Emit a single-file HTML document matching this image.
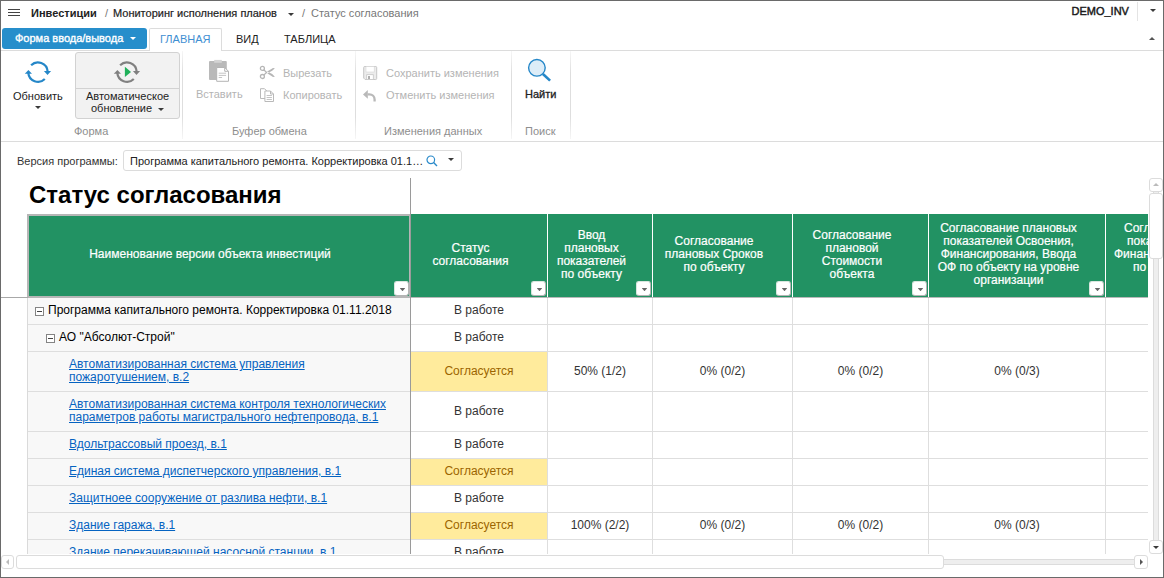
<!DOCTYPE html>
<html lang="ru">
<head>
<meta charset="utf-8">
<title>Статус согласования</title>
<style>
*{box-sizing:border-box;margin:0;padding:0}
html,body{width:1164px;height:578px;overflow:hidden;background:#fff}
body{font-family:"Liberation Sans",Arial,sans-serif;font-size:11px;color:#333;position:relative}
.abs{position:absolute}
.t{position:absolute;white-space:nowrap;line-height:14px;height:14px}
.frame{position:absolute;left:0;top:0;width:1164px;height:578px;border:1px solid #6a6a6a;z-index:50;pointer-events:none}
.dis{color:#b4b4b4}
.grp{color:#8e8e8e}
.sep{position:absolute;top:51px;height:88px;width:1px;background:linear-gradient(#f6f6f6,#dedede 25%,#dedede 75%,#f6f6f6)}
.caret{position:absolute;width:0;height:0;border-left:3px solid transparent;border-right:3px solid transparent;border-top:3px solid #3a3a3a}
/* table */
.hd{-webkit-text-stroke:0.2px #fff;position:absolute;top:214px;height:83px;background:#229263;color:#fff;font-size:12px;line-height:13px;text-align:center;display:flex;align-items:center;justify-content:center;padding-right:17px;padding-bottom:2px}
.fb{position:absolute;width:15px;height:15px;top:281px;background:#fff;border-radius:3px;border:1px solid #d9e6df;border-right-color:#b4b4b4;border-bottom-color:#b4b4b4}
.fb:after{content:"";position:absolute;left:4.7px;top:6px;width:5.6px;height:3.2px;background:#666;clip-path:polygon(0 0,100% 0,50% 100%)}
.hl{position:absolute;height:1px;background:#dedede;left:28px;width:1120px}
.vl{position:absolute;width:1px;background:#dedede;top:298px;height:256px}
.c{position:absolute;font-size:12px;line-height:13px;text-align:center;color:#333;padding-top:6px;white-space:nowrap}
.c.h39{padding-top:13px}
.y{background:#ffeb9c;color:#9c6500}
.lk{position:absolute;left:69px;font-size:12px;line-height:13px;color:#0563c1;text-decoration:underline;white-space:nowrap}
.tx{position:absolute;font-size:12px;line-height:13px;color:#000;white-space:nowrap}
.ex{position:absolute;width:9px;height:9px;border:1px solid #848484;background:#fff}
.ex:after{content:"";position:absolute;left:1px;top:3px;width:5px;height:1px;background:#444}
.sb{position:absolute;background:#fff;border:1px solid #dcdcdc;border-radius:3px}
</style>
</head>
<body>
<!-- top bar -->
<div class="abs" style="left:8px;top:9px;width:12px;height:1px;background:#444"></div>
<div class="abs" style="left:8px;top:12px;width:12px;height:1px;background:#444"></div>
<div class="abs" style="left:8px;top:15px;width:12px;height:1px;background:#444"></div>
<div class="t" style="left:31px;top:6px;font-weight:bold;color:#222">Инвестиции</div>
<div class="t" style="left:105px;top:6px;color:#777">/</div>
<div class="t" style="left:113px;top:6px;color:#222;-webkit-text-stroke:0.2px #222">Мониторинг исполнения планов</div>
<div class="caret" style="left:288px;top:13px"></div>
<div class="t" style="left:302px;top:6px;color:#777">/</div>
<div class="t" style="left:311px;top:6px;color:#777">Статус согласования</div>
<div class="t" style="left:1071.5px;top:4px;color:#1a1a1a;-webkit-text-stroke:0.45px #1a1a1a">DEMO_INV</div>
<div class="abs" style="left:1137px;top:2px;width:1px;height:19px;background:#e4e4e4"></div>
<div class="caret" style="left:1150px;top:9px"></div>

<!-- tab row -->
<div class="abs" style="left:1px;top:50px;width:1162px;height:1px;background:#dcdcdc"></div>
<div class="abs" style="left:2px;top:28px;width:145px;height:21px;background:#268ecb;border-radius:3px"></div>
<div class="t" style="left:15px;top:31px;color:#fff;-webkit-text-stroke:0.35px #fff">Форма ввода/вывода</div>
<div class="caret" style="left:130px;top:37px;border-top-color:#fff"></div>
<div class="abs" style="left:149px;top:28px;width:73px;height:23px;background:#fff;border:1px solid #dcdcdc;border-bottom:none;border-radius:2px 2px 0 0"></div>
<div class="t" style="left:160px;top:32px;color:#3f8fd2;font-size:11px">ГЛАВНАЯ</div>
<div class="t" style="left:236px;top:32px;color:#222">ВИД</div>
<div class="t" style="left:284px;top:32px;color:#222">ТАБЛИЦА</div>
<div class="abs" style="left:1149px;top:37px;width:0;height:0;border-left:3px solid transparent;border-right:3px solid transparent;border-bottom:3px solid #555"></div>

<!-- ribbon -->
<div class="abs" style="left:1px;top:141px;width:1162px;height:1px;background:#dcdcdc"></div>
<div class="sep" style="left:182px"></div>
<div class="sep" style="left:355px"></div>
<div class="sep" style="left:511px"></div>
<div class="sep" style="left:570px"></div>

<!-- refresh -->
<svg class="abs" style="left:18px;top:54px" width="40" height="36" viewBox="0 0 40 36">
 <g fill="none" stroke="#2587c8" stroke-width="2.2">
  <path d="M13.1 11.2 A9.7 9.7 0 0 1 29.6 17.3"/>
  <path d="M26.8 25 A9.7 9.7 0 0 1 10.3 18.9"/>
 </g>
 <path d="M25.9 17.1 L33.1 17.1 L29.5 21 Z" fill="#2587c8"/>
 <path d="M6.8 19.8 L14 19.8 L10.4 15.9 Z" fill="#2587c8"/>
</svg>
<div class="t" style="left:13px;top:89px;color:#222">Обновить</div>
<div class="caret" style="left:35px;top:106px"></div>

<!-- auto update -->
<div class="abs" style="left:75px;top:52px;width:105px;height:67px;background:#f2f2f2;border:1px solid #d2d2d2;border-radius:3px"></div>
<div class="abs" style="left:76px;top:88px;width:103px;height:1px;background:#d2d2d2"></div>
<svg class="abs" style="left:107px;top:54px" width="40" height="36" viewBox="0 0 40 36">
 <g fill="none" stroke="#808080" stroke-width="2.2">
  <path d="M13.1 11.2 A9.7 9.7 0 0 1 29.6 17.3"/>
  <path d="M26.8 25 A9.7 9.7 0 0 1 10.3 18.9"/>
 </g>
 <path d="M25.9 17.1 L33.1 17.1 L29.5 21 Z" fill="#808080"/>
 <path d="M6.8 19.8 L14 19.8 L10.4 15.9 Z" fill="#808080"/>
 <path d="M17.9 12.8 L24 17.9 L17.9 23.1 Z" fill="#20b15a"/>
</svg>
<div class="t" style="left:86px;top:89px;color:#222">Автоматическое</div>
<div class="t" style="left:91px;top:101px;color:#222">обновление</div>
<div class="caret" style="left:158px;top:108px"></div>
<div class="t grp" style="left:74px;top:124px">Форма</div>

<!-- clipboard -->
<svg class="abs" style="left:208px;top:59px" width="22" height="24" viewBox="0 0 22 24">
 <rect x="1" y="2" width="17.8" height="19" rx="1" fill="#b9b9b9"/>
 <rect x="6.2" y="0.9" width="7.6" height="2.9" fill="#d4d4d4"/>
 <path d="M8.7 8.5 h8 l3.8 3.8 v10 h-11.8z" fill="#fff" stroke="#b4b4b4" stroke-width="1"/>
 <path d="M16.7 8.5 v3.8 h3.8" fill="none" stroke="#b4b4b4" stroke-width="1"/>
 <path d="M10.7 14.2h7.4M10.7 16.4h7.4M10.7 18.5h3.4" stroke="#c4c4c4" stroke-width="1"/>
</svg>
<div class="t dis" style="left:196px;top:87px">Вставить</div>
<svg class="abs" style="left:259px;top:65px" width="17" height="15" viewBox="0 0 17 15">
 <g fill="none" stroke="#b6b6b6" stroke-width="1.3">
  <circle cx="3.4" cy="3.4" r="2"/><circle cx="3.4" cy="11.5" r="2"/>
  <path d="M4.8 4.8 L8 7.9M4.8 10.1 L8 7"/>
 </g>
 <path d="M7 7.3 L14 3 L15.9 3.2 L13.2 5.8 L8.2 8.5Z M7 7.6 L14 11.9 L15.9 11.7 L13.2 9.1 L8.2 6.4Z" fill="#b6b6b6"/>
</svg>
<div class="t dis" style="left:283px;top:66px">Вырезать</div>
<svg class="abs" style="left:259px;top:87px" width="16" height="16" viewBox="0 0 16 16">
 <g fill="#fff" stroke="#b9b9b9" stroke-width="1">
  <path d="M1.5 1.7 h4 l2.5 2.5 v7.3 h-6.5z"/>
  <path d="M5.9 4 h5.6 l3 3 v7.5 h-8.6z"/>
  <path d="M11.5 4 v3 h3" fill="none"/>
 </g>
 <path d="M7.6 8.5h5.3M7.6 10.5h5.3M7.6 12.5h5.3" stroke="#c4c4c4" stroke-width="1"/>
</svg>
<div class="t dis" style="left:283px;top:88px">Копировать</div>
<div class="t grp" style="left:232px;top:124px">Буфер обмена</div>

<!-- data changes -->
<svg class="abs" style="left:362px;top:65px" width="17" height="16" viewBox="0 0 17 16">
 <path d="M1.7 2.5 a1 1 0 0 1 1-1 h11 a1 1 0 0 1 1 1 v11 a1 1 0 0 1 -1 1 h-10.6 l-1.4 -1.4z" fill="#ececec" stroke="#c6c6c6" stroke-width="1"/>
 <rect x="4" y="1.5" width="8.2" height="5.5" fill="#fff" stroke="#d6d6d6" stroke-width="0.6"/>
 <rect x="4.7" y="9.7" width="6.6" height="4.8" fill="#fff" stroke="#c6c6c6" stroke-width="0.8"/>
 <rect x="6" y="11" width="2" height="3" fill="#b0b0b0"/>
</svg>
<div class="t dis" style="left:386px;top:66px">Сохранить изменения</div>
<svg class="abs" style="left:362px;top:89px" width="16" height="14" viewBox="0 0 16 14">
 <path d="M1 5.4 L5.8 1.1 L5.8 9.8 Z" fill="#b9b9b9"/>
 <path d="M5.6 5.4 H7.4 A5.2 5.2 0 0 1 12.6 10.6 V12.6" fill="none" stroke="#b9b9b9" stroke-width="2.3"/>
</svg>
<div class="t dis" style="left:386px;top:88px">Отменить изменения</div>
<div class="t grp" style="left:384px;top:124px">Изменения данных</div>

<!-- find -->
<svg class="abs" style="left:526px;top:58px" width="27" height="26" viewBox="0 0 27 26">
 <circle cx="10.9" cy="9.8" r="8.3" fill="#ddedf8" stroke="#2587c8" stroke-width="1.4"/>
 <path d="M16.9 16 L24.1 22.6" stroke="#2587c8" stroke-width="2.6" stroke-linecap="butt"/>
</svg>
<div class="t" style="left:525px;top:87px;color:#222;-webkit-text-stroke:0.3px #222">Найти</div>
<div class="t grp" style="left:525px;top:124px">Поиск</div>

<!-- parameter row -->
<div class="t" style="left:17px;top:154px;color:#333">Версия программы:</div>
<div class="abs" style="left:123px;top:150px;width:339px;height:21px;border:1px solid #dcdcdc;border-radius:3px;background:#fff"></div>
<div class="t" style="left:130px;top:154px;color:#222">Программа капитального ремонта. Корректировка 01.1…</div>
<svg class="abs" style="left:426px;top:155px" width="12" height="12" viewBox="0 0 12 12">
 <circle cx="4.8" cy="4.8" r="3.8" fill="none" stroke="#2a8aca" stroke-width="1.2"/>
 <path d="M7.6 7.6 L11 11" stroke="#2a8aca" stroke-width="1.4"/>
</svg>
<div class="caret" style="left:448px;top:158px"></div>

<!-- title -->
<div class="abs" style="left:29px;top:181px;font-size:24px;line-height:28px;font-weight:bold;color:#000;white-space:nowrap">Статус согласования</div>

<!-- table header -->
<div class="abs" style="left:27px;top:214px;width:383px;height:84px;background:#b6b6b6"></div>
<div class="hd" style="left:29px;top:216px;height:80px;width:380px;padding-right:18px;padding-bottom:4px">Наименование версии объекта инвестиций</div>
<div class="abs" style="left:411px;top:297px;width:737px;height:1px;background:#b8b8b8"></div>
<div class="hd" style="left:411px;width:136px">Статус<br>согласования</div>
<div class="hd" style="left:548px;width:104px">Ввод<br>плановых<br>показателей<br>по объекту</div>
<div class="hd" style="left:653px;width:139px">Согласование<br>плановых Сроков<br>по объекту</div>
<div class="hd" style="left:793px;width:135px">Согласование<br>плановой<br>Стоимости<br>объекта</div>
<div class="hd" style="left:929px;width:176px">Согласование плановых<br>показателей Освоения,<br>Финансирования, Ввода<br>ОФ по объекту на уровне<br>организации</div>
<div class="hd" style="left:1106px;width:42px;overflow:hidden;display:block;padding:0;text-align:left;white-space:nowrap">
<span style="position:absolute;left:18px;top:8px">Согласование</span>
<span style="position:absolute;left:21px;top:21px">показателей</span>
<span style="position:absolute;left:8px;top:34px">Финансирования</span>
<span style="position:absolute;left:27px;top:47px">по объекту</span>
</div>
<div class="fb" style="left:394px"></div>
<div class="fb" style="left:531px"></div>
<div class="fb" style="left:636px"></div>
<div class="fb" style="left:776px"></div>
<div class="fb" style="left:912px"></div>
<div class="fb" style="left:1089px"></div>

<!-- body -->
<div class="abs" style="left:28px;top:298px;width:382px;height:256px;background:#f8f8f8"></div>
<div class="abs" style="left:1px;top:297px;width:27px;height:1px;background:#a8a8a8"></div>
<div class="abs" style="left:27px;top:298px;width:1px;height:256px;background:#dadada"></div>

<div class="c y h39" style="left:411px;top:352px;width:136px;height:39px"></div>
<div class="c y" style="left:411px;top:459px;width:136px;height:26px"></div>
<div class="c y" style="left:411px;top:513px;width:136px;height:26px"></div>

<div class="hl" style="top:324px"></div>
<div class="hl" style="top:351px"></div>
<div class="hl" style="top:391px"></div>
<div class="hl" style="top:431px"></div>
<div class="hl" style="top:458px"></div>
<div class="hl" style="top:485px"></div>
<div class="hl" style="top:512px"></div>
<div class="hl" style="top:539px"></div>
<div class="vl" style="left:547px"></div>
<div class="vl" style="left:652px"></div>
<div class="vl" style="left:792px"></div>
<div class="vl" style="left:928px"></div>
<div class="vl" style="left:1105px"></div>

<div class="ex" style="left:35px;top:307px"></div>
<div class="tx" style="left:48px;top:304px">Программа капитального ремонта. Корректировка 01.11.2018</div>
<div class="ex" style="left:46px;top:334px"></div>
<div class="tx" style="left:59px;top:331px">АО "Абсолют-Строй"</div>
<div class="lk" style="top:358px">Автоматизированная система управления<br>пожаротушением, в.2</div>
<div class="lk" style="top:398px">Автоматизированная система контроля технологических<br>параметров работы магистрального нефтепровода, в.1</div>
<div class="lk" style="top:438px">Вдольтрассовый проезд, в.1</div>
<div class="lk" style="top:465px">Единая система диспетчерского управления, в.1</div>
<div class="lk" style="top:492px">Защитноее сооружение от разлива нефти, в.1</div>
<div class="lk" style="top:519px">Здание гаража, в.1</div>
<div class="lk" style="top:546px">Здание перекачивающей насосной станции, в.1</div>

<div class="c" style="left:411px;top:298px;width:136px;height:26px">В работе</div>
<div class="c" style="left:411px;top:325px;width:136px;height:26px">В работе</div>
<div class="c h39" style="left:411px;top:352px;width:136px;height:39px;color:#9c6500">Согласуется</div>
<div class="c h39" style="left:411px;top:392px;width:136px;height:39px">В работе</div>
<div class="c" style="left:411px;top:432px;width:136px;height:26px">В работе</div>
<div class="c" style="left:411px;top:459px;width:136px;height:26px;color:#9c6500">Согласуется</div>
<div class="c" style="left:411px;top:486px;width:136px;height:26px">В работе</div>
<div class="c" style="left:411px;top:513px;width:136px;height:26px;color:#9c6500">Согласуется</div>
<div class="c" style="left:411px;top:540px;width:136px;height:26px">В работе</div>

<div class="c h39" style="left:548px;top:352px;width:104px;height:39px">50% (1/2)</div>
<div class="c h39" style="left:653px;top:352px;width:139px;height:39px">0% (0/2)</div>
<div class="c h39" style="left:793px;top:352px;width:135px;height:39px">0% (0/2)</div>
<div class="c h39" style="left:929px;top:352px;width:176px;height:39px">0% (0/3)</div>
<div class="c" style="left:548px;top:513px;width:104px;height:26px">100% (2/2)</div>
<div class="c" style="left:653px;top:513px;width:139px;height:26px">0% (0/2)</div>
<div class="c" style="left:793px;top:513px;width:135px;height:26px">0% (0/2)</div>
<div class="c" style="left:929px;top:513px;width:176px;height:26px">0% (0/3)</div>

<!-- freeze line -->
<div class="abs" style="left:410px;top:178px;width:1px;height:376px;background:#9a9a9a"></div>

<!-- mask below table -->
<div class="abs" style="left:1px;top:554px;width:1162px;height:23px;background:#fff"></div>
<div class="abs" style="left:1148px;top:172px;width:15px;height:400px;background:#fff"></div>

<!-- v scrollbar -->
<div class="abs" style="left:1153px;top:190px;width:6px;height:352px;background:#eee;border:1px solid #dcdcdc"></div>
<div class="sb" style="left:1149px;top:178px;width:14px;height:14px"></div>
<div class="abs" style="left:1153px;top:183px;width:0;height:0;border-left:3px solid transparent;border-right:3px solid transparent;border-bottom:3px solid #bbb"></div>
<div class="sb" style="left:1149px;top:193px;width:14px;height:66px"></div>
<div class="sb" style="left:1149px;top:540px;width:14px;height:14px"></div>
<div class="caret" style="left:1153px;top:546px"></div>

<!-- h scrollbar -->
<div class="abs" style="left:940px;top:559px;width:196px;height:6px;background:#eee;border:1px solid #dcdcdc"></div>
<div class="sb" style="left:1px;top:555px;width:13px;height:14px"></div>
<div class="abs" style="left:6px;top:559px;width:0;height:0;border-top:3px solid transparent;border-bottom:3px solid transparent;border-right:3px solid #bbb"></div>
<div class="sb" style="left:16px;top:555px;width:928px;height:14px"></div>
<div class="sb" style="left:1134px;top:555px;width:14px;height:14px"></div>
<div class="abs" style="left:1140px;top:559px;width:0;height:0;border-top:3px solid transparent;border-bottom:3px solid transparent;border-left:3px solid #555"></div>

<div class="frame"></div>
</body>
</html>
